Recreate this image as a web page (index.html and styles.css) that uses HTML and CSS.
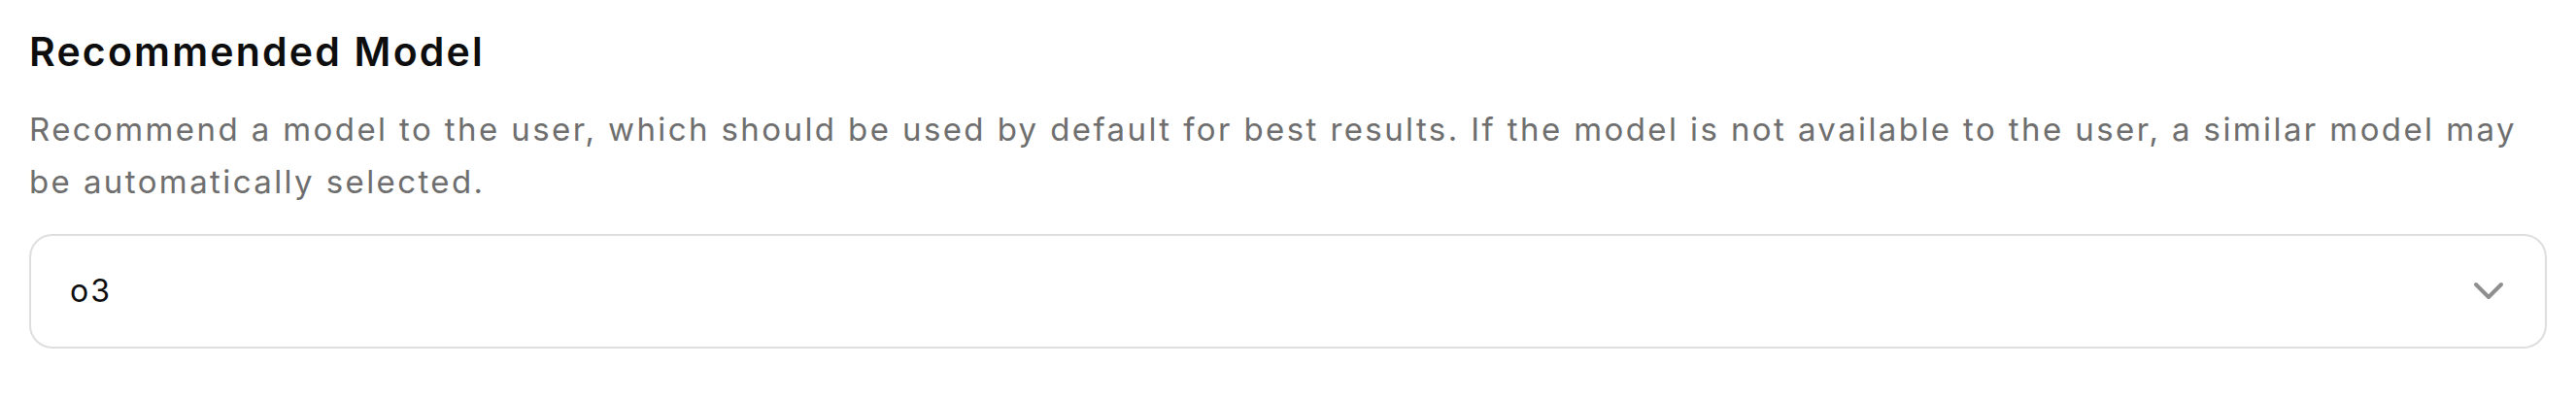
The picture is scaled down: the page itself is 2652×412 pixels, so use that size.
FILE: index.html
```html
<!DOCTYPE html>
<html lang="en">
<head>
<meta charset="utf-8">
<title>Recommended Model</title>
<link rel="stylesheet" href="styles.css">
</head>
<body>
<section class="field">
  <h2 class="field-title">Recommended Model</h2>
  <p class="field-desc">Recommend a model to the user, which should be used by default for best results. If the model is not available to the user, a similar model may be automatically selected.</p>
  <div class="select">
    <span class="select-value">o3</span>
    <svg class="chevron" width="32" height="20" viewBox="0 0 32 20" aria-hidden="true">
      <polyline points="3,3 16,16 29,3" fill="none" stroke="currentColor" stroke-width="4" stroke-linecap="round" stroke-linejoin="round"/>
    </svg>
  </div>
</section>
</body>
</html>
```
FILE: styles.css
```css
html, body {
  margin: 0;
  padding: 0;
  background: #ffffff;
}
body {
  font-family: Inter, "Noto Sans", "Liberation Sans", sans-serif;
}
.field {
  padding: 29px 30px 0 30px;
  display: flex;
  flex-direction: column;
}
.field-title {
  margin: 0;
  font-size: 41px;
  line-height: 48px;
  font-weight: 600;
  letter-spacing: 2.2px;
  color: #0d0d0d;
}
.field-desc {
  margin: 29px 0 0 0;
  font-size: 33px;
  line-height: 54px;
  font-weight: 400;
  letter-spacing: 2.4px;
  color: #6e6e6e;
}
.select {
  margin-top: 27px;
  height: 118px;
  box-sizing: border-box;
  border: 2px solid #dedede;
  border-radius: 24px;
  display: flex;
  align-items: center;
  justify-content: space-between;
  padding: 0 42px 0 40px;
}
.select-value {
  font-size: 32px;
  line-height: 40px;
  letter-spacing: 2px;
  color: #0d0d0d;
}
.chevron {
  color: #8e8e8e;
  display: block;
}
```
